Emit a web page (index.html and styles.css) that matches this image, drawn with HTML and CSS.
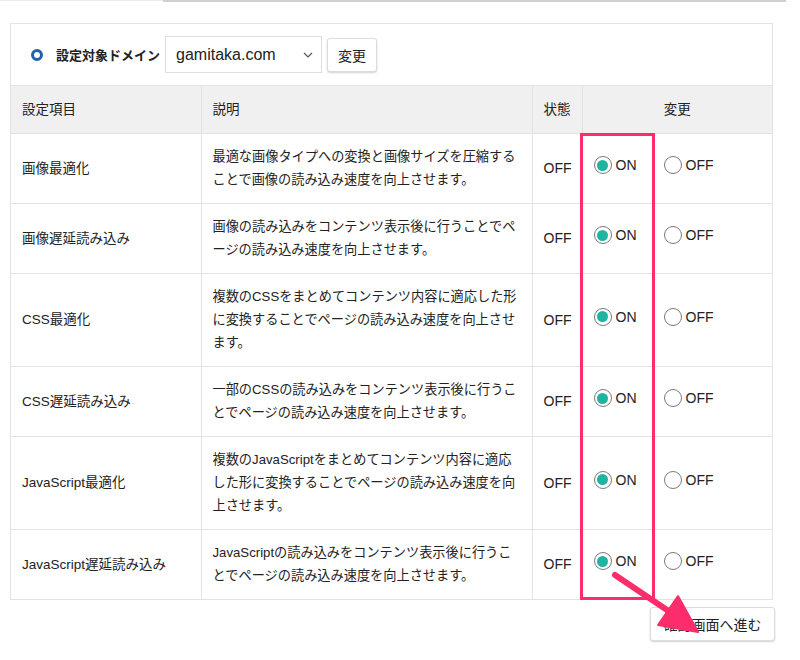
FILE: index.html
```html
<!DOCTYPE html>
<html lang="ja">
<head>
<meta charset="utf-8">
<title>設定</title>
<link rel="stylesheet" href="styles.css">
</head>
<body>
<div class="tabline"><span class="tab-left"></span><span class="tab-right"></span></div>
<div class="page">
  <div class="panel">
    <div class="domain-row">
      <span class="ring"></span>
      <span class="domain-label">設定対象ドメイン</span>
      <div class="select">
        <span>gamitaka.com</span>
        <svg class="chev" width="10" height="6" viewBox="0 0 10 6"><path d="M1 1l4 4 4-4" fill="none" stroke="#555" stroke-width="1.2"/></svg>
      </div>
      <button class="btn">変更</button>
    </div>
    <table class="settings">
      <colgroup>
        <col class="c1"><col class="c2"><col class="c3"><col class="c4">
      </colgroup>
      <thead>
        <tr><th>設定項目</th><th>説明</th><th>状態</th><th class="center">変更</th></tr>
      </thead>
      <tbody>
        <tr>
          <td class="name">画像最適化</td>
          <td class="desc">最適な画像タイプへの変換と画像サイズを圧縮することで画像の読み込み速度を向上させます。</td>
          <td class="state">OFF</td>
          <td class="change"><div class="opts"><label class="opt"><span class="radio on"></span>ON</label><label class="opt"><span class="radio"></span>OFF</label></div></td>
        </tr>
        <tr>
          <td class="name">画像遅延読み込み</td>
          <td class="desc">画像の読み込みをコンテンツ表示後に行うことでページの読み込み速度を向上させます。</td>
          <td class="state">OFF</td>
          <td class="change"><div class="opts"><label class="opt"><span class="radio on"></span>ON</label><label class="opt"><span class="radio"></span>OFF</label></div></td>
        </tr>
        <tr>
          <td class="name">CSS最適化</td>
          <td class="desc">複数のCSSをまとめてコンテンツ内容に適応した形に変換することでページの読み込み速度を向上させます。</td>
          <td class="state">OFF</td>
          <td class="change"><div class="opts"><label class="opt"><span class="radio on"></span>ON</label><label class="opt"><span class="radio"></span>OFF</label></div></td>
        </tr>
        <tr>
          <td class="name">CSS遅延読み込み</td>
          <td class="desc">一部のCSSの読み込みをコンテンツ表示後に行うことでページの読み込み速度を向上させます。</td>
          <td class="state">OFF</td>
          <td class="change"><div class="opts"><label class="opt"><span class="radio on"></span>ON</label><label class="opt"><span class="radio"></span>OFF</label></div></td>
        </tr>
        <tr>
          <td class="name">JavaScript最適化</td>
          <td class="desc">複数のJavaScriptをまとめてコンテンツ内容に適応した形に変換することでページの読み込み速度を向上させます。</td>
          <td class="state">OFF</td>
          <td class="change"><div class="opts"><label class="opt"><span class="radio on"></span>ON</label><label class="opt"><span class="radio"></span>OFF</label></div></td>
        </tr>
        <tr>
          <td class="name">JavaScript遅延読み込み</td>
          <td class="desc">JavaScriptの読み込みをコンテンツ表示後に行うことでページの読み込み速度を向上させます。</td>
          <td class="state">OFF</td>
          <td class="change"><div class="opts"><label class="opt"><span class="radio on"></span>ON</label><label class="opt"><span class="radio"></span>OFF</label></div></td>
        </tr>
      </tbody>
    </table>
  </div>
  <div class="footer">
    <button class="btn confirm">確認画面へ進む</button>
  </div>
  <div class="highlight"></div>
  <svg class="arrow" width="800" height="660" viewBox="0 0 800 660">
    <line x1="615" y1="575" x2="670" y2="612" stroke="#fd2d6c" stroke-width="6" stroke-linecap="round"/>
    <polygon points="698,632 678,596 658,625" fill="#fd2d6c" stroke="#fd2d6c" stroke-width="2" stroke-linejoin="round"/>
  </svg>
</div>
</body>
</html>
```

FILE: styles.css
```css
html, body {
  margin: 0;
  padding: 0;
  background: #fff;
}
body {
  font-family: "Liberation Sans", "Noto Sans CJK JP", sans-serif;
  color: #222;
  position: relative;
  width: 800px;
  height: 660px;
  overflow: hidden;
}
.tabline {
  display: flex;
  height: 2px;
}
.tab-left {
  width: 163px;
  height: 1px;
  background: #ececec;
}
.tab-right {
  width: 623px;
  height: 2px;
  background: #cfcfcf;
}
.page {
  padding: 21px 0 0 10px;
  width: 765px;
}
.panel {
  width: 761px;
  border: 1px solid #e3e3e3;
}
.domain-row {
  display: flex;
  align-items: center;
  padding: 12px 20px;
  height: 37px;
}
.ring {
  width: 6px;
  height: 6px;
  border: 3px solid #1f62b0;
  border-radius: 50%;
  margin-right: 13px;
}
.domain-label {
  font-weight: bold;
  font-size: 13px;
  margin-right: 5px;
}
.select {
  box-sizing: border-box;
  width: 157px;
  height: 37px;
  border: 1px solid #dedede;
  display: flex;
  align-items: center;
  justify-content: space-between;
  padding: 0 8px 0 10px;
  font-size: 16px;
  color: #222;
}
.chev {
  display: block;
}
.btn {
  font-family: "Liberation Sans", "Noto Sans CJK JP", sans-serif;
  background: #fff;
  border: 1px solid #dcdcdc;
  border-radius: 3px;
  box-shadow: 0 1px 2px rgba(0, 0, 0, 0.18);
  font-size: 14px;
  color: #222;
  height: 34px;
  width: 50px;
  margin-left: 5px;
  padding: 0;
  cursor: pointer;
}
.settings {
  width: 100%;
  border-collapse: collapse;
  table-layout: fixed;
}
.c1 { width: 190px; }
.c2 { width: 331px; }
.c3 { width: 50px; }
.c4 { width: auto; }
.settings th,
.settings td {
  border-top: 1px solid #e3e3e3;
  border-left: 1px solid #e3e3e3;
  text-align: left;
  vertical-align: middle;
  font-weight: normal;
}
.settings th:first-child,
.settings td:first-child {
  border-left: none;
}
.settings th {
  background: #f0f0f0;
  font-size: 13.5px;
  line-height: 23px;
  padding: 12px 11px;
}
.settings th.center {
  text-align: center;
}
.settings td {
  padding: 11px 11px 12px;
}
.name {
  font-size: 13.5px;
  line-height: 23px;
}
.desc {
  font-size: 13.2px;
  line-height: 23px;
}
.state {
  font-size: 14px;
}
.settings td.change {
  padding-top: 8px;
  padding-bottom: 15px;
}
.opts {
  display: flex;
  align-items: center;
  gap: 27px;
  font-size: 14px;
  line-height: 18px;
}
.opt {
  display: flex;
  align-items: center;
  gap: 4px;
}
.radio {
  box-sizing: border-box;
  width: 18px;
  height: 18px;
  border: 1px solid #7a7a7a;
  border-radius: 50%;
  display: flex;
  align-items: center;
  justify-content: center;
  background: #fff;
}
.radio.on::after {
  content: "";
  width: 11px;
  height: 11px;
  border-radius: 50%;
  background: #1fb4a2;
}
.footer {
  display: flex;
  justify-content: flex-end;
  padding-top: 7px;
}
.btn.confirm {
  width: 125px;
  height: 34px;
  margin: 0;
}
.highlight {
  position: absolute;
  left: 580px;
  top: 133px;
  width: 69px;
  height: 461px;
  border: 3px solid #fd2d6c;
}
.arrow {
  position: absolute;
  left: 0;
  top: 0;
  pointer-events: none;
}
```
